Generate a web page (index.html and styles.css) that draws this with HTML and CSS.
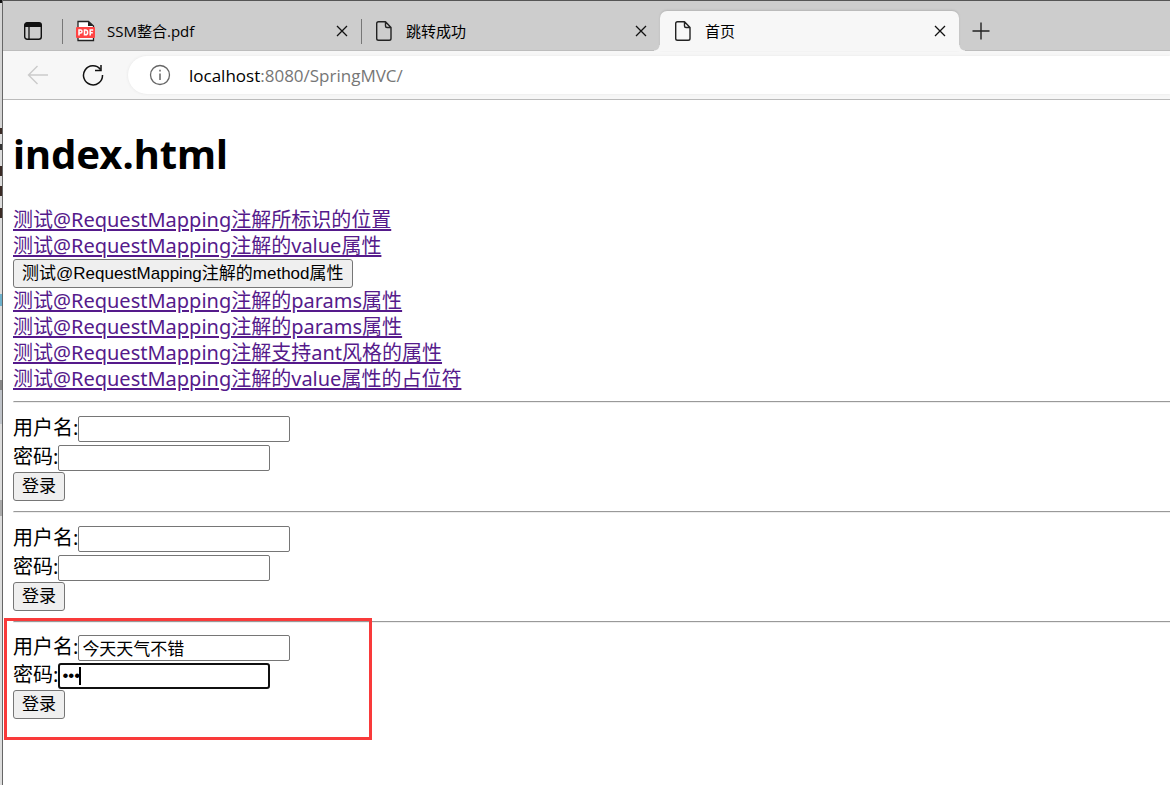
FILE: index.html
```html
<!DOCTYPE html>
<html lang="zh-CN">
<head>
<meta charset="utf-8">
<title>首页</title>
<link rel="stylesheet" href="styles.css">
</head>
<body>
<div class="desktop">
  <div class="backdrop"></div>
  <div class="window">
    <header class="tabbar">
      <button class="tab-actions" type="button" aria-label="标签页操作">
        <svg width="20" height="20" viewBox="0 0 20 20"><rect x="1.7" y="1.7" width="16.6" height="16.6" rx="2.5" fill="none" stroke="#111" stroke-width="1.4"/><path d="M1.5 6V4Q1.5 1.5 4 1.5H16Q18.500 1.500 18.500 4V6Z" fill="#111"/><path d="M6 6V18" stroke="#111" stroke-width="1.300"/></svg>
      </button>
      <div class="tab">
        <svg class="tab-icon" width="22" height="22" viewBox="0 0 22 22"><path d="M3 1.500H13.500L18.500 6V20.500H3Z" fill="#fff" stroke="#222" stroke-width="1.300"/><path d="M13 1.500V6H18.500Z" fill="#222"/><rect x="1" y="7" width="19" height="11" rx="1" fill="#ff4444"/><g fill="none" stroke="#fff" stroke-width="1.500"><path d="M4 15.500V10H5.500Q7 10 7 11.500T5.500 13H4"/><path d="M9.500 10V14.800H10.500Q12.600 14.800 12.600 12.400T10.500 10Z"/><path d="M15.200 15.500V10H18.200M15.200 12.700H17.800"/></g></svg>
        <span class="tab-title">SSM整合.pdf</span>
        <button class="close" type="button" aria-label="关闭"><svg width="12" height="12" viewBox="0 0 12 12"><path d="M1 1L11 11M11 1L1 11" stroke="#111" stroke-width="1.300"/></svg></button>
      </div>
      <div class="tab">
        <svg class="tab-icon" width="22" height="22" viewBox="0 0 22 22"><path d="M4.500 1.700H11.500L17 7.500V18.500Q17 20.300 15.200 20.300H4.500Q2.700 20.300 2.700 18.500V3.500Q2.700 1.700 4.500 1.700ZM11.500 1.700V6Q11.500 7.500 13 7.500H17" fill="none" stroke="#222" stroke-width="1.400" stroke-linejoin="round"/></svg>
        <span class="tab-title">跳转成功</span>
        <button class="close" type="button" aria-label="关闭"><svg width="12" height="12" viewBox="0 0 12 12"><path d="M1 1L11 11M11 1L1 11" stroke="#111" stroke-width="1.300"/></svg></button>
      </div>
      <div class="tab tab-active">
        <svg class="tab-icon" width="22" height="22" viewBox="0 0 22 22"><path d="M4.500 1.700H11.500L17 7.500V18.500Q17 20.300 15.200 20.300H4.500Q2.700 20.300 2.700 18.500V3.500Q2.700 1.700 4.500 1.700ZM11.500 1.700V6Q11.500 7.500 13 7.500H17" fill="none" stroke="#222" stroke-width="1.400" stroke-linejoin="round"/></svg>
        <span class="tab-title">首页</span>
        <button class="close" type="button" aria-label="关闭"><svg width="12" height="12" viewBox="0 0 12 12"><path d="M1 1L11 11M11 1L1 11" stroke="#111" stroke-width="1.300"/></svg></button>
      </div>
      <button class="new-tab" type="button" aria-label="新建标签页"><svg width="18" height="18" viewBox="0 0 18 18"><path d="M9 0.500V17.500M0.500 9H17.500" stroke="#222" stroke-width="1.400"/></svg></button>
    </header>
    <nav class="toolbar">
      <button class="nav-button" type="button" aria-label="后退" disabled><svg width="22" height="20" viewBox="0 0 22 20"><path d="M21 10H1.500M10.500 1L1.500 10L10.500 19" fill="none" stroke="#cbcbcb" stroke-width="1.400"/></svg></button>
      <button class="nav-button" type="button" aria-label="刷新"><svg width="22" height="22" viewBox="0 0 22 22"><path d="M18.500 5.500A9.500 9.500 0 1 0 20.500 11" fill="none" stroke="#111" stroke-width="1.500"/><path d="M19 1V6.500H13" fill="none" stroke="#111" stroke-width="1.500"/></svg></button>
      <div class="address">
        <svg width="22" height="22" viewBox="0 0 22 22"><circle cx="11" cy="11" r="9.500" fill="none" stroke="#666" stroke-width="1.300"/><path d="M11 9.500V16M11 5.800V7.600" stroke="#666" stroke-width="1.500"/></svg>
        <span class="url"><span class="host">localhost</span>:8080/SpringMVC/</span>
      </div>
    </nav>
    <main class="page">
      <h1 class="heading">index.html</h1>
      <div class="links">
        <a href="#">测试@RequestMapping注解所标识的位置</a>
        <a href="#">测试@RequestMapping注解的value属性</a>
        <button class="button" type="button">测试@RequestMapping注解的method属性</button>
        <a href="#">测试@RequestMapping注解的params属性</a>
        <a href="#">测试@RequestMapping注解的params属性</a>
        <a href="#">测试@RequestMapping注解支持ant风格的属性</a>
        <a href="#">测试@RequestMapping注解的value属性的占位符</a>
      </div>
      <hr class="rule">
      <form class="form">
        <div class="row"><label for="user1">用户名:</label><input class="field" id="user1" type="text"></div>
        <div class="row"><label for="pass1">密码:</label><input class="field" id="pass1" type="password"></div>
        <button class="button" type="button">登录</button>
      </form>
      <hr class="rule">
      <form class="form">
        <div class="row"><label for="user2">用户名:</label><input class="field" id="user2" type="text"></div>
        <div class="row"><label for="pass2">密码:</label><input class="field" id="pass2" type="password"></div>
        <button class="button" type="button">登录</button>
      </form>
      <hr class="rule">
      <form class="form form-marked">
        <div class="row"><label for="user3">用户名:</label><input class="field" id="user3" type="text" value="今天天气不错"></div>
        <div class="row"><label for="pass3">密码:</label><span class="field-wrap"><input class="field field-focused" id="pass3" type="password" value="123"><span class="caret"></span></span></div>
        <button class="button" type="button">登录</button>
        <div class="marker"></div>
      </form>
    </main>
  </div>
</div>
</body>
</html>
```
FILE: styles.css
```css
* { box-sizing: border-box; }

body {
  margin: 0;
  background: #fff;
  color: #000;
  font-family: "Noto Sans", "Noto Sans CJK SC", sans-serif;
  font-size: 20px;
  overflow: hidden;
}

button { font: inherit; color: inherit; }

.desktop { display: flex; min-height: 100vh; }

.backdrop {
  width: 3px;
  flex: none;
  border-right: 1px solid #666;
  background: linear-gradient(#111 0 3px, #d5d5d5 3px 128px, #3a2a25 128px 134px, #ddd 134px 144px, #333 144px 150px, #ddd 150px 166px, #3a2a25 166px 176px, #ddd 176px 186px, #3a2a25 186px 196px, #ddd 196px 208px, #3a2a25 208px 218px, #ddd 218px 294px, #6cb0cb 294px 306px, #ddd 306px 380px, #888 380px 390px, #bfc3c9 390px 424px, #ddd 424px 500px, #aaa 500px 516px, #ddd 516px);
}

.window { flex: 1; min-width: 0; }

.tabbar {
  display: flex;
  height: 51px;
  padding-top: 10px;
  border-top: 1px solid #555;
  border-bottom: 1px solid #bdbdbd;
  background: #cdcdcd;
  font-family: "Open Sans", "Noto Sans CJK SC", sans-serif;
  font-size: 15px;
}

.tab-actions, .close, .new-tab, .nav-button {
  display: flex;
  align-items: center;
  justify-content: center;
  padding: 0;
  border: 0;
  background: none;
}

.tab-actions { width: 59px; height: 40px; }

.tab {
  position: relative;
  display: flex;
  align-items: center;
  width: 299px;
  height: 40px;
  padding: 0 11px 0 13px;
}

.tab:not(.tab-active)::before {
  content: "";
  position: absolute;
  left: 0;
  top: 8px;
  width: 1px;
  height: 25px;
  background: #777;
}

.tab-title { flex: 1; margin-left: 10px; line-height: 20px; }

.close { width: 16px; height: 20px; }

.tab-active {
  border-radius: 7px 7px 0 0;
  background: #f7f7f7;
  box-shadow: 0 -1px 2px #b5b5b5;
}

.tab-active::before, .tab-active::after {
  content: "";
  position: absolute;
  bottom: 0;
  width: 6px;
  height: 6px;
}

.tab-active::before { left: -6px; background: radial-gradient(circle at 0 0, #cdcdcd 5px, #f7f7f7 6px); }
.tab-active::after { right: -6px; background: radial-gradient(circle at 100% 0, #cdcdcd 5px, #f7f7f7 6px); }

.new-tab { width: 44px; height: 40px; }

.toolbar {
  display: flex;
  align-items: center;
  height: 49px;
  padding-left: 7px;
  border-bottom: 1px solid #bbb;
  background: #f7f7f7;
}

.nav-button { width: 55px; height: 40px; }

.address {
  display: flex;
  flex: 1;
  align-items: center;
  gap: 18px;
  height: 38px;
  margin-left: 8px;
  padding-left: 21px;
  border-radius: 19px 0 0 19px;
  background: #fff;
  box-shadow: 0 0 3px #e4e4e4;
  font-family: "Open Sans", sans-serif;
  font-size: 17px;
}

.url { color: #767676; }
.host { color: #000; }

.page { padding: 27px 0 0 10px; }

.heading {
  margin: 0 0 26px;
  font-size: 40px;
  line-height: 54px;
}

.links { display: flex; flex-direction: column; align-items: flex-start; line-height: 26px; }
.links a { color: #551a8b; text-decoration-thickness: 2px; text-underline-offset: 2px; }

.button {
  display: block;
  height: 29px;
  padding: 0 8px;
  border: 1px solid #767676;
  border-radius: 3px;
  background: #efefef;
  font-family: "Liberation Sans", "Noto Sans CJK SC", sans-serif;
  font-size: 17px;
  line-height: 26px;
  white-space: nowrap;
}

.rule { margin: 9px 0 10px; border: 1px solid #eee; border-top-color: #999; border-right: 0; }

.form { position: relative; padding-bottom: 1px; }
.form .button { margin-top: 1px; }

.row { display: flex; align-items: flex-end; height: 29px; line-height: 28px; }
.form-marked .row { height: 28px; }

.field {
  display: block;
  width: 212px;
  height: 26px;
  padding: 0 3px 1px;
  border: 1px solid #767676;
  border-radius: 2px;
  background: #fff;
  font-family: "Liberation Sans", "Noto Sans CJK SC", sans-serif;
  font-size: 17px;
}

.field-wrap { position: relative; }
.field-focused { padding: 0 2px; border: 2px solid #101010; border-radius: 3px; outline: none; }

.caret {
  position: absolute;
  left: 21px;
  top: 4px;
  width: 2px;
  height: 18px;
  background: #000;
}

.marker {
  position: absolute;
  left: -9px;
  top: -15px;
  width: 368px;
  height: 122px;
  border: 3px solid #f93a3a;
  pointer-events: none;
}
```
